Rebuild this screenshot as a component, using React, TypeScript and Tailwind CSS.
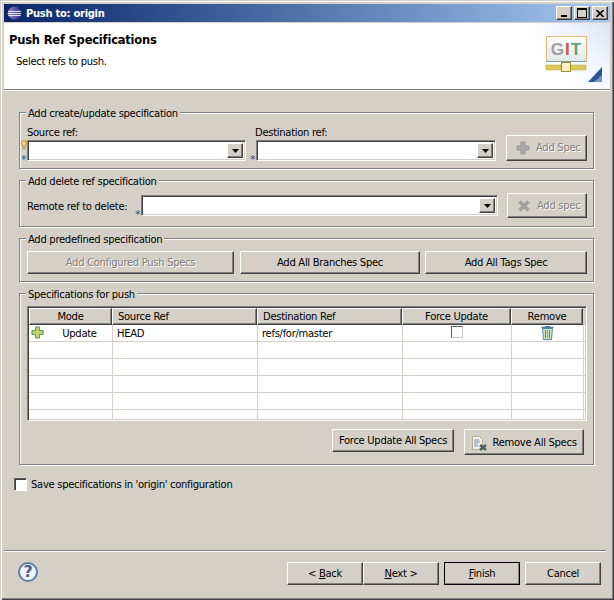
const raised = "border border-t-white border-l-white border-r-[#404040] border-b-[#404040] shadow-[inset_-1px_-1px_0_#808080]";
const etched = "relative border border-[#808080] shadow-[inset_1px_1px_0_#ffffff,1px_1px_0_#ffffff]";

function Btn({ className = "", disabled = false, children }: { className?: string; disabled?: boolean; children: React.ReactNode }) {
  return (
    <div className={`${raised} flex items-center justify-center shrink-0 whitespace-nowrap ${disabled ? "text-[#808080] [text-shadow:1px_1px_0_#ffffff]" : "text-black"} ${className}`}>
      {children}
    </div>
  );
}

function Group({ title, className = "", children }: { title: string; className?: string; children: React.ReactNode }) {
  return (
    <div className={`${etched} ml-[15px] w-[575px] ${className}`}>
      <span className="absolute left-[6px] top-[-6px] bg-[#d4d0c8] px-[2px] leading-[14px] h-[13px] whitespace-nowrap">{title}</span>
      {children}
    </div>
  );
}

function Asterisk({ className = "" }: { className?: string }) {
  return <span className={`absolute text-[#1f4f86] text-[11px] leading-[11px] ${className}`}>*</span>;
}

function Combo({ className = "", children }: { className?: string; children?: React.ReactNode }) {
  return (
    <div className={`relative h-[21px] shrink-0 bg-white border border-t-[#808080] border-l-[#808080] border-r-white border-b-white shadow-[inset_1px_1px_0_#404040,inset_-1px_-1px_0_#d4d0c8] flex justify-end p-[2px] ${className}`}>
      <div className={`${raised} w-[16px] h-[15px] bg-[#d4d0c8] flex items-center justify-center`}>
        <svg width="7" height="4" viewBox="0 0 7 4"><path d="M0 0h7L3.5 4z" fill="#000" /></svg>
      </div>
      {children}
    </div>
  );
}

function PlusIcon({ color = "#a8a8a8", dark = "#989898", size = 14 }: { color?: string; dark?: string; size?: number }) {
  return (
    <svg width={size} height={size} viewBox="0 0 14 14">
      <path d="M5 1h4v4h4v4H9v4H5V9H1V5h4z" fill={color} stroke={dark} strokeWidth="1" />
    </svg>
  );
}

const cols = ["w-[83px]", "w-[145px]", "w-[145px]", "w-[109px]", "w-[72px]"];
const rowCols = ["w-[84px]", "w-[145px]", "w-[145px]", "w-[109px]", "w-[72px]"];

function HeaderCell({ w, label, align = "center" }: { w: string; label: string; align?: "center" | "left" }) {
  return (
    <div className={`${raised} ${w} h-[17px] shrink-0 flex items-center leading-none ${align === "center" ? "justify-center" : "justify-start pl-[5px]"}`}>
      {label}
    </div>
  );
}

function Row({ h = "h-[17px]", border = true, children }: { h?: string; border?: boolean; children?: React.ReactNode[] }) {
  return (
    <div className={`flex ${h} ${border ? "border-b border-[#d4d0c8]" : ""}`}>
      {rowCols.map((w, i) => (
        <div key={w + i} className={`${w} shrink-0 border-r border-[#d4d0c8] flex items-center leading-none pt-[1px] ${i === 1 || i === 2 ? "pl-[4px]" : ""} ${i === 0 ? "relative justify-center" : ""} ${i >= 3 ? "justify-center" : ""}`}>
          {children ? children[i] : null}
        </div>
      ))}
    </div>
  );
}

export default function App() {
  return (
    <div
      className="relative w-[614px] h-[600px] bg-[#d4d0c8] text-[10px] tracking-[-0.3px] text-black overflow-hidden shadow-[inset_1px_1px_0_#d4d0c8,inset_2px_2px_0_#ffffff,inset_-1px_-1px_0_#404040,inset_-2px_-2px_0_#808080] px-[4px] pt-[4px] leading-[14px]"
      style={{ fontFamily: '"DejaVu Sans", Verdana, sans-serif' }}
    >
      {/* Title bar */}
      <div className="h-[18px] w-[606px] bg-gradient-to-r from-[#0a246a] to-[#a6caf0] flex items-center pl-[3px] pr-[2px]">
        <svg width="16" height="16" viewBox="0 0 16 16" className="shrink-0">
          <defs>
            <linearGradient id="ec" x1="0" y1="0" x2="1" y2="0">
              <stop offset="0" stopColor="#8c86c8" />
              <stop offset="1" stopColor="#2f2a78" />
            </linearGradient>
          </defs>
          <circle cx="7.5" cy="8" r="6.5" fill="url(#ec)" />
          <path d="M1 6.4h13M0.6 8.6h13.8M1.2 10.6h12.6" stroke="#f2f0ff" strokeWidth="1" />
        </svg>
        <span className="ml-[3px] pt-[1px] text-white font-bold">Push to: origin</span>
        <div className="ml-auto flex">
          <div className={`${raised} bg-[#d4d0c8] w-[16px] h-[14px] flex items-end justify-start pl-[4px] pb-[2px]`}>
            <div className="w-[6px] h-[2px] bg-black" />
          </div>
          <div className={`${raised} bg-[#d4d0c8] w-[16px] h-[14px] flex items-center justify-center ml-[2px] mr-[2px]`}>
            <div className="w-[10px] h-[10px] border border-black border-t-2" />
          </div>
          <div className={`${raised} bg-[#d4d0c8] w-[16px] h-[14px] flex items-center justify-center`}>
            <svg width="8" height="7" viewBox="0 0 8 7"><path d="M0.5 0L7.5 7M7.5 0L0.5 7" stroke="#000" strokeWidth="1.6" /></svg>
          </div>
        </div>
      </div>

      {/* Banner */}
      <div className="relative mt-[1px] h-[66px] w-[606px] bg-white pl-[5px] pt-[10px] overflow-hidden">
        <div className="text-[11.5px] font-bold leading-[15px] tracking-[-0.2px]">Push Ref Specifications</div>
        <div className="ml-[7px] mt-[7px] leading-[14px]">Select refs to push.</div>
        <div className="absolute right-[0px] top-0 w-[75px] h-[66px] bg-[linear-gradient(225deg,#dbe3f5_0%,#f1f4fc_35%,#ffffff_70%)]">
          <div className="absolute left-[11px] top-[13px] w-[41px] h-[26px] border border-[#e3b777] border-b-[#7f9f9f] bg-gradient-to-b from-white to-[#dfe8e8] flex items-center justify-center font-bold text-[17px] leading-none tracking-[1px]" style={{ fontFamily: '"Liberation Sans", sans-serif' }}>
            <span className="text-[#a0a0a0]">G</span>
            <span className="text-[#c25b4f]">I</span>
            <span className="text-[#5fa474]">T</span>
          </div>
          <svg width="75" height="66" viewBox="0 0 75 66" className="absolute left-0 top-0">
            <rect x="11" y="42" width="40" height="5" fill="#d8c95a" stroke="#b9a838" strokeWidth="0.5" />
            <rect x="26.5" y="39.5" width="9" height="9" fill="#fdf2c4" stroke="#a08a28" />
            <path d="M67 44v15H53z" fill="#2c5596" />
            <path d="M67 52v7H59z" fill="#6f93c6" />
          </svg>
        </div>
      </div>
      <div className="h-[1px] w-[606px] bg-[#808080]" />
      <div className="h-[1px] w-[606px] bg-white" />

      {/* Add create/update */}
      <Group title="Add create/update specification" className="mt-[21px] h-[57px] pl-[7px] pt-[12px]">
        <div className="flex">
          <div className="w-[229px] shrink-0">
            <div className="h-[14px] pt-[1px]">Source ref:</div>
            <Combo className="w-[219px] mt-[1px]">
              <svg width="6" height="10" viewBox="0 0 6 10" className="absolute left-[-7px] top-[-1px]">
                <path d="M3 0.5a2.5 2.5 0 0 1 1.5 4.5V7h-3V5A2.5 2.5 0 0 1 3 0.5z" fill="#f7cf7a" stroke="#d98a1c" strokeWidth="1" />
                <path d="M2 8.5h2" stroke="#a08050" />
              </svg>
              <Asterisk className="left-[-7px] top-[13px]" />
            </Combo>
          </div>
          <div className="w-[250px] shrink-0">
            <div className="h-[14px] pt-[1px] -ml-[1px]">Destination ref:</div>
            <Combo className="w-[240px] mt-[1px]">
              <Asterisk className="left-[-7px] top-[13px]" />
            </Combo>
          </div>
          <Btn disabled className="w-[81px] h-[26px] mt-[10px] gap-[6px] !justify-start pl-[9px]">
            <PlusIcon />
            <span>Add Spec</span>
          </Btn>
        </div>
      </Group>

      {/* Add delete */}
      <Group title="Add delete ref specification" className="mt-[11px] h-[47px] pl-[7px] pt-[12px]">
        <div className="flex items-start">
          <div className="w-[114px] h-[21px] mt-[3px] shrink-0 flex items-center">Remote ref to delete:</div>
          <Combo className="w-[357px] mt-[2px]">
            <Asterisk className="left-[-7px] top-[13px]" />
          </Combo>
          <Btn disabled className="w-[80px] h-[25px] ml-[9px] gap-[6px] !justify-start pl-[9px]">
            <svg width="14" height="14" viewBox="0 0 14 14"><path d="M2.5 2.5L11.5 11.5M11.5 2.5L2.5 11.5" stroke="#a0a0a0" strokeWidth="3.6" /></svg>
            <span>Add spec</span>
          </Btn>
        </div>
      </Group>

      {/* Predefined */}
      <Group title="Add predefined specification" className="mt-[11px] h-[44px] pl-[7px] pt-[12px] flex">
        <Btn disabled className="w-[207px] h-[23px]">Add Configured Push Specs</Btn>
        <Btn className="w-[180px] h-[23px] ml-[6px]">Add All Branches Spec</Btn>
        <Btn className="w-[162px] h-[23px] ml-[5px]">Add All Tags Spec</Btn>
      </Group>

      {/* Specifications for push */}
      <Group title="Specifications for push" className="mt-[11px] h-[172px] pl-[7px] pt-[12px]">
        <div className="w-[560px] h-[115px] bg-white border border-t-[#808080] border-l-[#808080] border-r-white border-b-white shadow-[inset_1px_1px_0_#404040,inset_-1px_-1px_0_#d4d0c8] p-[1px] overflow-hidden">
          <div className="flex bg-[#d4d0c8]">
            <HeaderCell w={cols[0]} label="Mode" />
            <HeaderCell w={cols[1]} label="Source Ref" align="left" />
            <HeaderCell w={cols[2]} label="Destination Ref" align="left" />
            <HeaderCell w={cols[3]} label="Force Update" />
            <HeaderCell w={cols[4]} label="Remove" />
          </div>
          <Row>
            {[
              <>
                <span className="absolute left-[2px] top-[1px]">
                  <PlusIcon color="#c6d86a" dark="#3f8a5a" size={13} />
                </span>
                <span className="ml-[18px]">Update</span>
              </>,
              <span key="a">HEAD</span>,
              <span key="b">refs/for/master</span>,
              <div key="c" className="w-[12px] h-[12px] -mt-[4px] bg-white border border-t-[#606060] border-l-[#606060] border-r-[#c8c8c8] border-b-[#c8c8c8]" />,
              <svg key="d" width="13" height="15" viewBox="0 0 13 15" className="-mt-[3px]">
                <path d="M0.5 2.5h12" stroke="#3f7fa8" strokeWidth="1.5" />
                <path d="M4 1.5h5" stroke="#3f7fa8" strokeWidth="1" />
                <path d="M1.5 3.5h10l-1 11h-8z" fill="#cfe4c0" stroke="#2f7398" strokeWidth="0.8" />
                <path d="M4.5 5v8M8.5 5v8" stroke="#3f86a8" strokeWidth="1" />
                <path d="M6.5 5v8" stroke="#6fa8a0" strokeWidth="1" />
              </svg>,
            ]}
          </Row>
          <Row />
          <Row />
          <Row />
          <Row />
          <Row h="h-[10px]" border={false} />
        </div>
        <div className="flex mt-[8px] ml-[305px] items-start">
          <Btn className="w-[122px] h-[23px]">Force Update All Specs</Btn>
          <Btn className="w-[120px] h-[26px] ml-[10px] pt-[1px]">
            <svg width="16" height="16" viewBox="0 0 16 16" className="mr-[5px]">
              <path d="M1.5 1.5h7l3 3v10h-10z" fill="#eef2f7" stroke="#b5a98a" />
              <path d="M3 5h5M3 7h6M3 9h4M3 11h4" stroke="#7c8fa6" />
              <path d="M9 10L15 15M15 10L9 15" stroke="#4f5f5f" strokeWidth="2.6" />
            </svg>
            <span>Remove All Specs</span>
          </Btn>
        </div>
      </Group>

      {/* Save */}
      <div className="flex items-center mt-[12px] ml-[10px] h-[14px]">
        <div className="w-[13px] h-[13px] shrink-0 bg-white border border-t-[#606060] border-l-[#606060] border-r-white border-b-white shadow-[inset_1px_1px_0_#404040]" />
        <span className="ml-[4px] pt-[1px] whitespace-nowrap">Save specifications in 'origin' configuration</span>
      </div>

      {/* Bottom separator */}
      <div className="h-[1px] w-[602px] bg-[#808080] mt-[59px]" />
      <div className="h-[1px] w-[602px] bg-white" />

      {/* Footer */}
      <div className="flex mt-[10px] items-start">
        <div className="ml-[14px] w-[20px] h-[20px] rounded-full border-2 border-[#5f7fa8] bg-[#eef2fa] flex items-center justify-center text-[16px] leading-none font-bold text-[#4a5f8a] shrink-0">?</div>
        <Btn className="w-[76px] h-[23px] ml-[249px]"><span>&lt; <u>B</u>ack</span></Btn>
        <Btn className="w-[76px] h-[23px]"><span><u>N</u>ext &gt;</span></Btn>
        <Btn className="w-[76px] h-[23px] ml-[5px] outline outline-1 outline-black -outline-offset-1"><span><u>F</u>inish</span></Btn>
        <Btn className="w-[76px] h-[23px] ml-[5px]">Cancel</Btn>
      </div>
    </div>
  );
}
